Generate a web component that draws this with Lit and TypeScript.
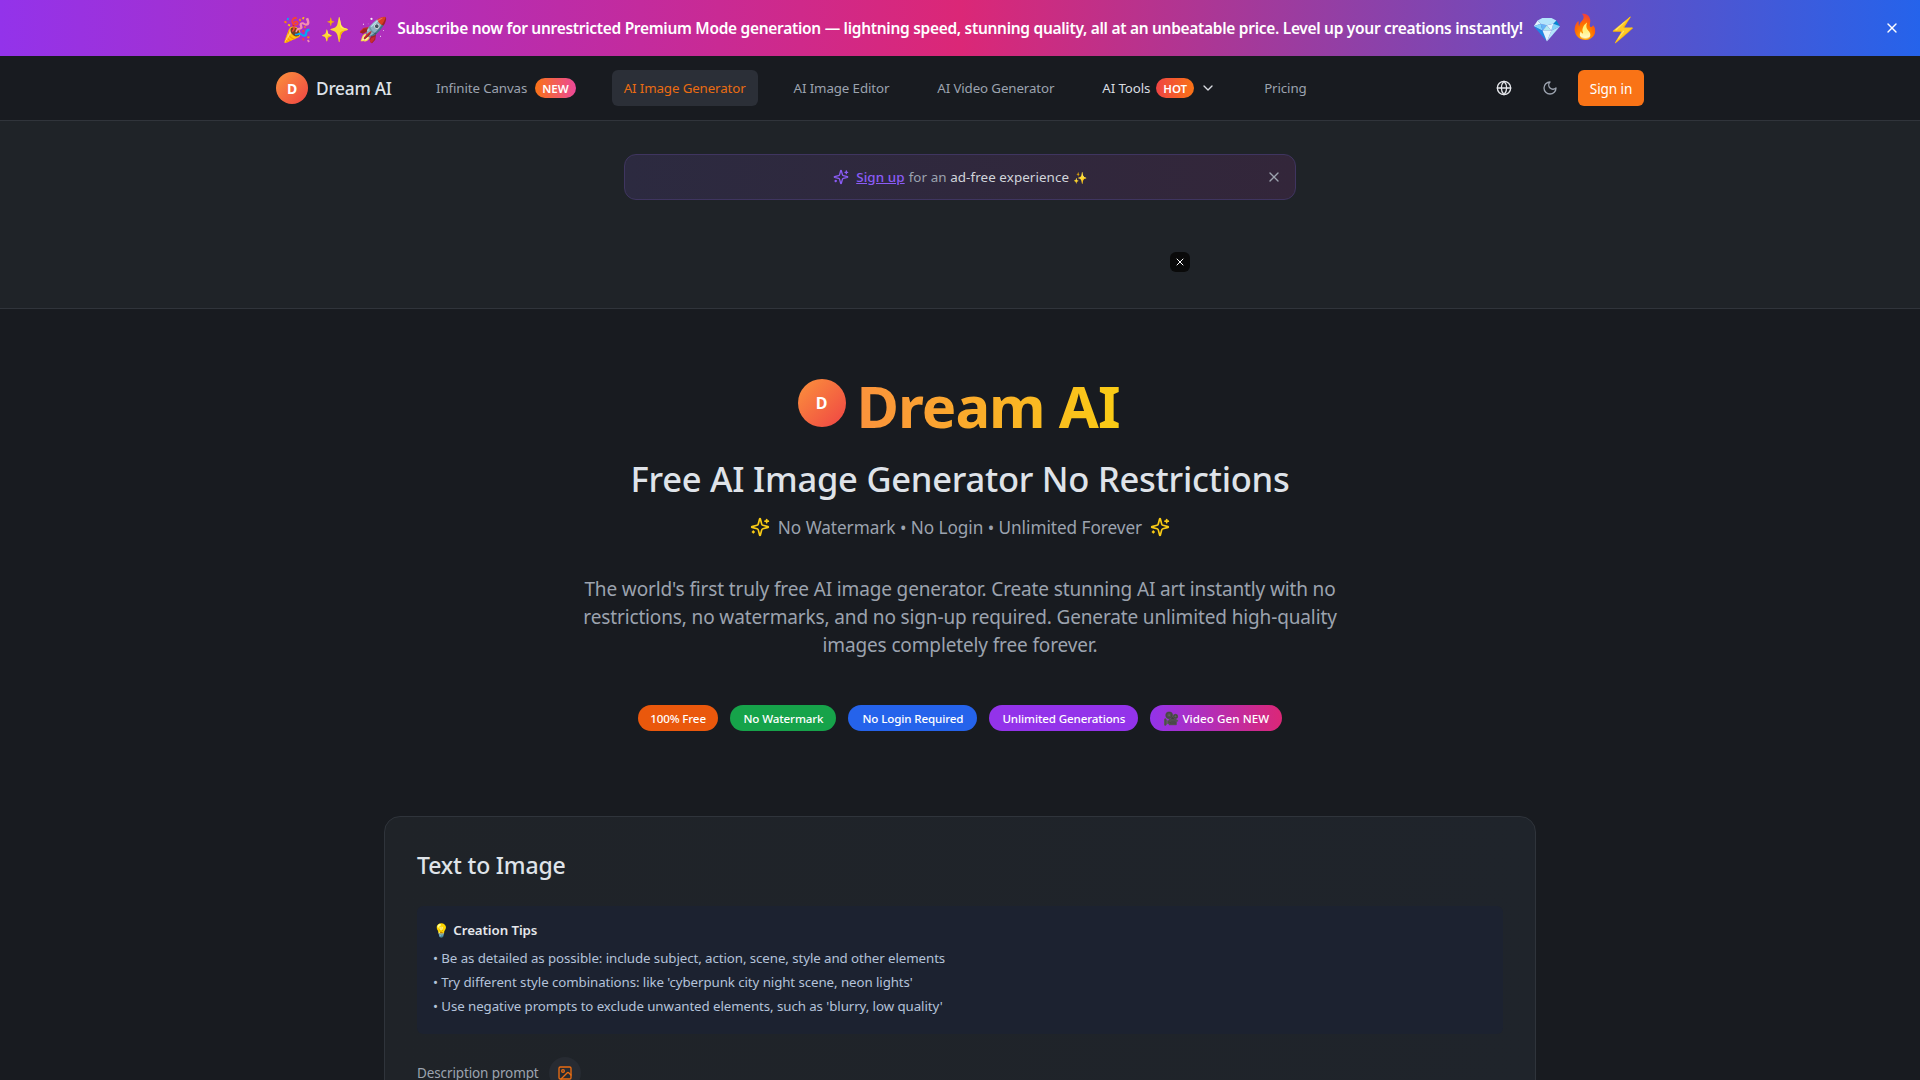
import { LitElement, html, css, svg } from "lit";
import { customElement } from "lit/decorators.js";

const icon = (body: unknown, cls: string) => html`<svg class=${cls} viewBox="0 0 24 24" fill="none" stroke="currentColor" stroke-width="2" stroke-linecap="round" stroke-linejoin="round">${body}</svg>`;
const X = svg`<path d="M18 6 6 18"/><path d="m6 6 12 12"/>`;
const SPARK = svg`<path d="M9.937 15.5A2 2 0 0 0 8.5 14.063l-6.135-1.582a.5.5 0 0 1 0-.962L8.5 9.936A2 2 0 0 0 9.937 8.5l1.582-6.135a.5.5 0 0 1 .963 0L14.063 8.5A2 2 0 0 0 15.5 9.937l6.135 1.581a.5.5 0 0 1 0 .964L15.5 14.063a2 2 0 0 0-1.437 1.437l-1.582 6.135a.5.5 0 0 1-.963 0z"/><path d="M20 3v4"/><path d="M22 5h-4"/><path d="M4 17v2"/><path d="M5 18H3"/>`;
const GLOBE = svg`<circle cx="12" cy="12" r="10"/><path d="M12 2a14.5 14.5 0 0 0 0 20 14.5 14.5 0 0 0 0-20"/><path d="M2 12h20"/>`;
const MOON = svg`<path d="M12 3a6 6 0 0 0 9 9 9 9 0 1 1-9-9Z"/>`;
const CHEV = svg`<path d="m6 9 6 6 6-6"/>`;
const IMG = svg`<rect x="3" y="3" width="18" height="18" rx="2"/><circle cx="9" cy="9" r="2"/><path d="m21 15-3.086-3.086a2 2 0 0 0-2.828 0L6 21"/>`;

@customElement("app-root")
export class AppRoot extends LitElement {
  static styles = css`
    :host { display: block; height: 1080px; overflow: hidden; background: #181b20; font-family: "Noto Sans", "Open Sans", sans-serif; color: #e5e7eb; }
    svg { display: block; flex: none; }
    .promo { height: 56px; background: linear-gradient(90deg, #9333ea, #db2777 50%, #2563eb); display: flex; align-items: center; justify-content: center; position: relative; color: #fff; font-size: 15.5px; font-weight: 600; letter-spacing: -0.3px; }
    .emos { display: flex; gap: 8px; font-size: 24px; letter-spacing: 0; }
    .up { transform: translateY(-3px); }
    .promo .txt { margin: 0 9px; white-space: nowrap; }
    .promo .close { position: absolute; right: 20px; top: 20px; width: 16px; height: 16px; color: #fff; }
    .nav { height: 64px; background: #181b20; border-bottom: 1px solid #30343b; display: flex; justify-content: center; box-sizing: content-box; }
    .navin { width: 1368px; display: flex; align-items: center; font-size: 13.3px; color: #9ca3af; letter-spacing: -0.11px; }
    .logo { width: 32px; height: 32px; border-radius: 50%; background: linear-gradient(135deg, #fb923c, #ef4444); color: #fff; font-weight: 700; font-size: 14px; display: flex; align-items: center; justify-content: center; letter-spacing: 0; }
    .brand { font-size: 17.3px; font-weight: 500; letter-spacing: -0.25px; color: #dfe3e9; margin: 0 20px 0 8px; width: 76px; white-space: nowrap; }
    .it { display: flex; align-items: center; height: 36px; padding: 0 12px; border-radius: 6px; white-space: nowrap; margin-left: 24px; }
    .it.first { margin-left: 12px; }
    .it.active { background: #2b2f37; color: #ea6c12; }
    .it.light { color: #d9dce1; }
    .badge { margin-left: 8px; height: 20px; padding: 0 7px; border-radius: 10px; color: #fff; font-size: 11.5px; font-weight: 600; display: flex; align-items: center; letter-spacing: 0; }
    .new { background: linear-gradient(90deg, #f97316, #ec4899); }
    .hot { margin-left: 6px; background: linear-gradient(90deg, #ef4444, #f97316); }
    .chev { width: 16px; height: 16px; margin-left: 6px; color: #d9dce1; }
    .spacer { flex: 1; }
    .ib { width: 16px; height: 16px; }
    .g { color: #e5e7eb; margin-right: 30px; }
    .m { color: #9ca3af; margin-right: 20px; }
    .signin { height: 36px; width: 66px; display: flex; align-items: center; justify-content: center; background: #f97316; border-radius: 6px; color: #fff; font-size: 13.6px; }
    .adzone { height: 188px; background: #1f2328; border-bottom: 1px solid #30343b; box-sizing: border-box; position: relative; padding-top: 33px; }
    .sign { width: 672px; height: 46px; box-sizing: border-box; margin: 0 auto; border-radius: 12px; border: 1px solid #3f3560; background: linear-gradient(90deg, #2c2a40, #33263a); display: flex; align-items: center; justify-content: center; position: relative; font-size: 13.4px; color: #9ca3af; letter-spacing: 0.08px; gap: 7px; }
    .sign .sp { width: 16px; height: 16px; color: #8b5cf6; }
    .sign a { color: #8b5cf6; text-decoration: underline; font-weight: 500; margin-right: -3px; }
    .sign b { font-weight: 400; color: #d1d5db; }
    .sign i { font-style: normal; font-size: 11.5px; }
    .sign .cl { position: absolute; right: 13px; top: 14px; width: 16px; height: 16px; color: #9ca3af; }
    .adx { position: absolute; left: 1170px; top: 131px; width: 20px; height: 20px; border-radius: 6px; background: #0a0a0a; color: #fff; display: flex; align-items: center; justify-content: center; }
    .adx svg { width: 12px; height: 12px; }
    .hero { display: flex; flex-direction: column; align-items: center; padding-top: 55px; }
    .title { display: flex; align-items: center; gap: 11px; height: 84px; padding-right: 3px; }
    .logo2 { width: 48px; height: 48px; font-size: 16px; margin-top: -6px; }
    h1 { margin: 0; font-size: 58px; font-weight: 700; line-height: 84px; background: linear-gradient(90deg, #fb923c, #facc15); -webkit-background-clip: text; background-clip: text; color: transparent; letter-spacing: -1px; }
    h2 { margin: 11px 0 0; font-size: 34.5px; font-weight: 500; line-height: 40px; color: #dfe3e9; letter-spacing: -0.24px; }
    .sub { margin-top: 15px; display: flex; align-items: center; gap: 8px; font-size: 17.2px; color: #9ca3af; line-height: 28px; letter-spacing: -0.05px; }
    .sub svg { width: 20px; height: 20px; color: #facc15; margin-top: -2px; }
    p { margin: 33px 0 0; width: 768px; text-align: center; font-size: 19px; line-height: 28px; color: #9ca3af; letter-spacing: -0.135px; }
    .pills { margin-top: 46px; display: flex; gap: 12px; }
    .pill { height: 26px; padding: 0 13px; border-radius: 13px; display: flex; align-items: center; font-size: 11.6px; font-weight: 500; color: #fff; letter-spacing: -0.12px; white-space: nowrap; }
    .pill.free { padding: 0 12.5px; background: #ea580c; }
    .pill.wm { background: #16a34a; }
    .pill.login { padding: 0 14px; background: #2563eb; }
    .pill.unl { background: #9333ea; }
    .pill.vid { background: linear-gradient(90deg, #9333ea, #db2777); letter-spacing: 0.08px; }
    .pill span { font-size: 13px; margin-right: 3px; }
    .card { width: 1152px; height: 400px; box-sizing: border-box; margin: 85px auto 0; background: linear-gradient(90deg, #1f2328, #1f242b); border: 1px solid #2f343b; border-radius: 16px; padding: 32px; }
    h3 { margin: 0; font-size: 23px; line-height: 32px; font-weight: 500; color: #dfe3e9; letter-spacing: -0.17px; }
    .tips { margin-top: 25px; height: 128px; box-sizing: border-box; background: #1c2230; border-radius: 6px; padding: 14px 16px; font-size: 13.3px; color: #b4c3da; letter-spacing: -0.08px; }
    .tt { font-weight: 600; color: #e5e7eb; line-height: 20px; margin-bottom: 6px; }
    .tl { line-height: 24px; }
    .lab { margin-top: 23px; display: flex; align-items: center; gap: 10px; font-size: 13.5px; color: #9ca3af; letter-spacing: -0.12px; }
    .imgb { width: 32px; height: 32px; border-radius: 50%; background: #272b32; color: #ea6c12; display: flex; align-items: center; justify-content: center; }
    .imgb svg { width: 16px; height: 16px; }
  `;

  render() {
    return html`
      <div class="promo">
        <div class="emos"><span>🎉</span><span>✨</span><span>🚀</span></div>
        <span class="txt">Subscribe now for unrestricted Premium Mode generation — lightning speed, stunning quality, all at an unbeatable price. Level up your creations instantly!</span>
        <div class="emos"><span>💎</span><span class="up">🔥</span><span>⚡</span></div>
        ${icon(X, "close")}
      </div>
      <div class="nav"><div class="navin">
        <div class="logo">D</div><div class="brand">Dream AI</div>
        <div class="it first">Infinite Canvas<span class="badge new">NEW</span></div>
        <div class="it active">AI Image Generator</div>
        <div class="it">AI Image Editor</div>
        <div class="it">AI Video Generator</div>
        <div class="it light">AI Tools<span class="badge hot">HOT</span>${icon(CHEV, "chev")}</div>
        <div class="it">Pricing</div>
        <div class="spacer"></div>
        ${icon(GLOBE, "ib g")}${icon(MOON, "ib m")}
        <div class="signin">Sign in</div>
      </div></div>
      <div class="adzone">
        <div class="sign">${icon(SPARK, "sp")}<a>Sign up</a><span>for an <b>ad-free experience</b> <i>✨</i></span>${icon(X, "cl")}</div>
        <div class="adx">${icon(X, "")}</div>
      </div>
      <div class="hero">
        <div class="title"><div class="logo logo2">D</div><h1>Dream AI</h1></div>
        <h2>Free AI Image Generator No Restrictions</h2>
        <div class="sub">${icon(SPARK, "")}<span>No Watermark • No Login • Unlimited Forever</span>${icon(SPARK, "")}</div>
        <p>The world's first truly free AI image generator. Create stunning AI art instantly with no restrictions, no watermarks, and no sign-up required. Generate unlimited high-quality images completely free forever.</p>
        <div class="pills">
          <div class="pill free">100% Free</div>
          <div class="pill wm">No Watermark</div>
          <div class="pill login">No Login Required</div>
          <div class="pill unl">Unlimited Generations</div>
          <div class="pill vid"><span>🎥</span>Video Gen NEW</div>
        </div>
      </div>
      <div class="card">
        <h3>Text to Image</h3>
        <div class="tips">
          <div class="tt">💡 Creation Tips</div>
          <div class="tl">• Be as detailed as possible: include subject, action, scene, style and other elements</div>
          <div class="tl">• Try different style combinations: like 'cyberpunk city night scene, neon lights'</div>
          <div class="tl">• Use negative prompts to exclude unwanted elements, such as 'blurry, low quality'</div>
        </div>
        <div class="lab">Description prompt<span class="imgb">${icon(IMG, "")}</span></div>
      </div>
    `;
  }
}
